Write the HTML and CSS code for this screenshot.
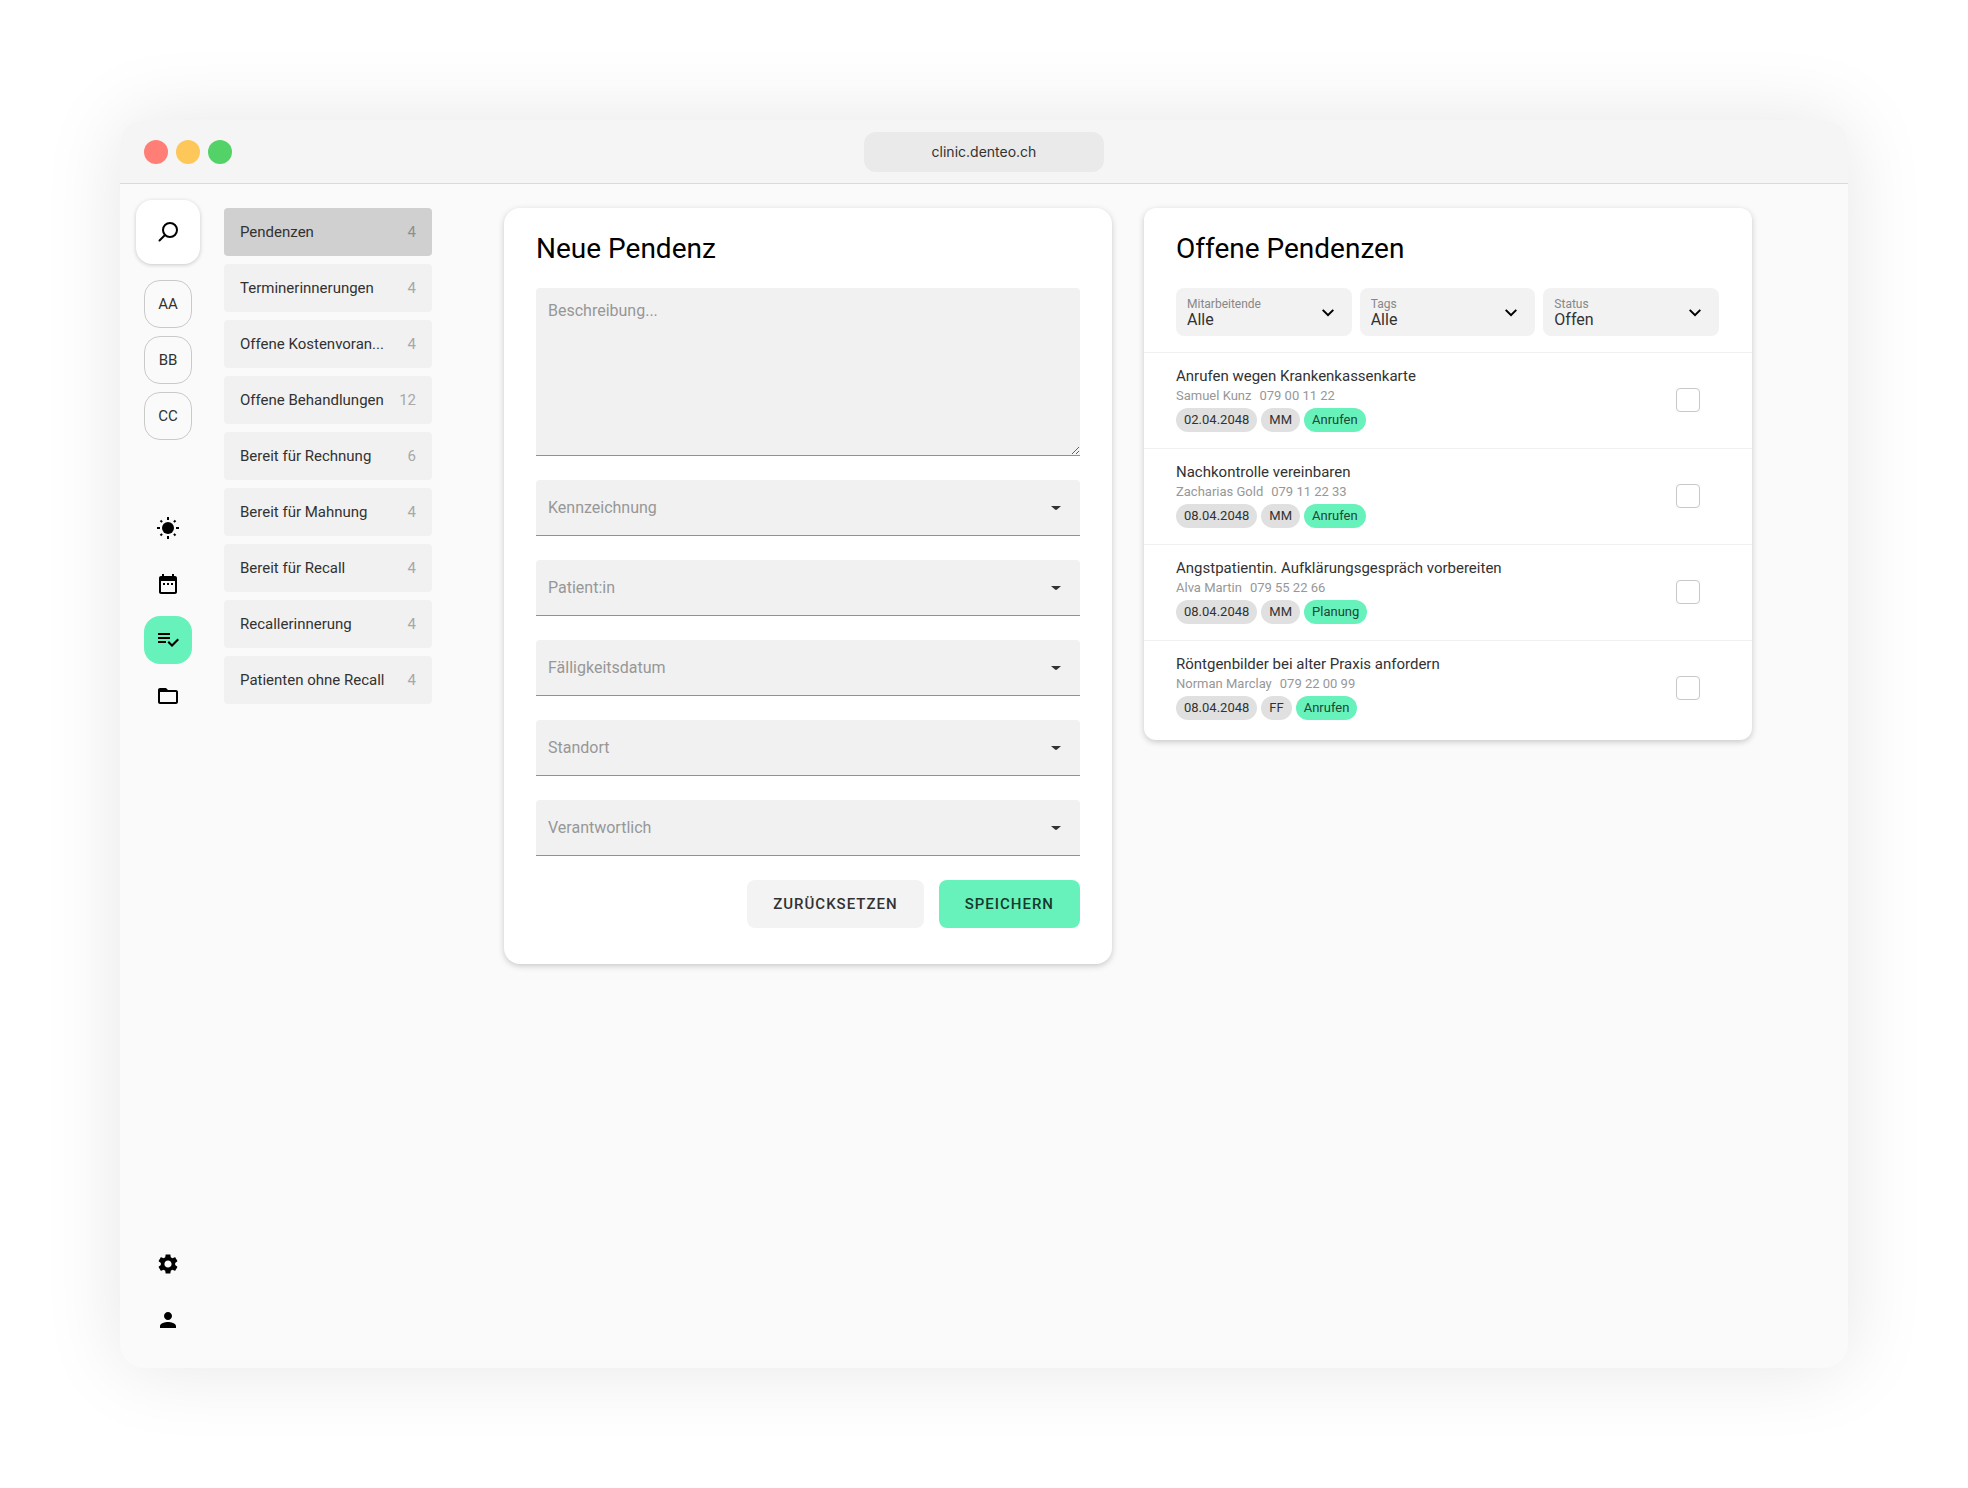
FILE: index.html
```html
<!DOCTYPE html>
<html lang="de">
  <head>
    <meta charset="utf-8" />
    <title>Pendenzen</title>
    <meta name="viewport" content="width=device-width, initial-scale=1" />
    <link rel="stylesheet" href="styles.css">
  </head>
  <body>
    <div class="window">
      <header class="titlebar">
        <div class="dots">
          <span class="dot red"></span>
          <span class="dot yellow"></span>
          <span class="dot green"></span>
        </div>
        <div class="address">clinic.denteo.ch</div>
      </header>

      <div class="app">
        <nav class="rail" aria-label="Hauptnavigation">
          <button class="search" aria-label="Suche">
            <svg class="icon" viewBox="0 0 24 24">
              <g fill="none" stroke="#000" stroke-width="2">
                <circle cx="14" cy="10" r="7" />
                <path d="M9 15l-5.500 5.500" stroke-linecap="round" />
              </g>
            </svg>
          </button>
          <div class="rail-group">
            <button class="avatar">AA</button>
            <button class="avatar">BB</button>
            <button class="avatar">CC</button>
          </div>
          <div class="rail-group rail-main">
            <a class="rail-link" href="#heute" aria-label="Heute">
              <svg class="icon" viewBox="0 0 24 24">
                <circle cx="12" cy="12" r="6" />
                <path fill="none" stroke="#000" stroke-width="2" d="M12 1v3M12 20v3M1 12h3M20 12h3M4.500 4.500l1.600 1.600M17.900 17.900l1.600 1.600M19.500 4.500l-1.600 1.600M6.100 17.900l-1.600 1.600" />
              </svg>
            </a>
            <a class="rail-link" href="#kalender" aria-label="Kalender">
              <svg class="icon" viewBox="0 0 24 24">
                <path d="M9 11H7v2h2v-2zm4 0h-2v2h2v-2zm4 0h-2v2h2v-2zm2-7h-1V2h-2v2H8V2H6v2H5c-1.110 0-1.990.9-1.990 2L3 20c0 1.100.890 2 2 2h14c1.100 0 2-.9 2-2V6c0-1.100-.9-2-2-2zm0 16H5V9h14v11z" />
              </svg>
            </a>
            <a class="rail-link active" href="#pendenzen" aria-label="Pendenzen">
              <svg class="icon" viewBox="0 1 24 24">
                <path d="M14 10H2v2h12v-2zm0-4H2v2h12V6zM2 16h8v-2H2v2zm19.500-4.500L23 13l-6.990 7-4.510-4.500L13 14l3.010 3 5.490-5.500z" />
              </svg>
            </a>
            <a class="rail-link" href="#dokumente" aria-label="Dokumente">
              <svg class="icon" viewBox="0 0 24 24">
                <path d="M20 6h-8l-2-2H4c-1.100 0-1.990.9-1.990 2L2 18c0 1.100.9 2 2 2h16c1.100 0 2-.9 2-2V8c0-1.100-.9-2-2-2zm0 12H4V8h16v10z" />
              </svg>
            </a>
          </div>
          <div class="rail-group rail-bottom">
            <a class="rail-link" href="#einstellungen" aria-label="Einstellungen">
              <svg class="icon" viewBox="0 0 24 24">
                <path d="M19.140 12.940c.04-.3.06-.61.06-.94 0-.32-.02-.64-.07-.94l2.030-1.580c.18-.14.23-.41.12-.61l-1.920-3.320c-.12-.22-.37-.29-.59-.22l-2.390.96c-.5-.38-1.030-.7-1.620-.94l-.36-2.540c-.04-.24-.24-.41-.48-.41h-3.840c-.24 0-.43.17-.47.41l-.36 2.540c-.59.24-1.130.57-1.620.94l-2.390-.96c-.22-.08-.47 0-.59.22L2.740 8.870c-.12.21-.08.47.12.61l2.030 1.580c-.05.3-.09.63-.09.94s.02.64.07.94l-2.030 1.580c-.18.14-.23.41-.12.61l1.920 3.320c.12.22.37.29.59.22l2.390-.96c.5.38 1.030.7 1.620.94l.36 2.540c.05.24.24.41.48.41h3.840c.24 0 .44-.17.47-.41l.36-2.540c.59-.24 1.130-.56 1.620-.94l2.390.96c.22.08.47 0 .59-.22l1.920-3.320c.12-.22.07-.47-.12-.61l-2.010-1.580zM12 15.600c-1.980 0-3.600-1.620-3.600-3.600s1.620-3.600 3.600-3.600 3.600 1.620 3.600 3.600-1.620 3.600-3.600 3.600z" />
              </svg>
            </a>
            <a class="rail-link" href="#profil" aria-label="Profil">
              <svg class="icon" viewBox="0 0 24 24">
                <path d="M12 12c2.210 0 4-1.790 4-4s-1.790-4-4-4-4 1.790-4 4 1.790 4 4 4zm0 2c-2.670 0-8 1.340-8 4v2h16v-2c0-2.660-5.330-4-8-4z" />
              </svg>
            </a>
          </div>
        </nav>

        <nav class="lists" aria-label="Listen">
          <a class="list-link active" href="#pendenzen"><span>Pendenzen</span><span class="count">4</span></a>
          <a class="list-link" href="#terminerinnerungen"><span>Terminerinnerungen</span><span class="count">4</span></a>
          <a class="list-link" href="#kosten"><span>Offene Kostenvoran...</span><span class="count">4</span></a>
          <a class="list-link" href="#behandlungen"><span>Offene Behandlungen</span><span class="count">12</span></a>
          <a class="list-link" href="#rechnung"><span>Bereit für Rechnung</span><span class="count">6</span></a>
          <a class="list-link" href="#mahnung"><span>Bereit für Mahnung</span><span class="count">4</span></a>
          <a class="list-link" href="#recall"><span>Bereit für Recall</span><span class="count">4</span></a>
          <a class="list-link" href="#recallerinnerung"><span>Recallerinnerung</span><span class="count">4</span></a>
          <a class="list-link" href="#ohne-recall"><span>Patienten ohne Recall</span><span class="count">4</span></a>
        </nav>

        <main class="content">
          <form class="card form-card">
            <h1>Neue Pendenz</h1>
            <textarea class="description" aria-label="Beschreibung" placeholder="Beschreibung..."></textarea>
            <div class="field">
              <select aria-label="Kennzeichnung"><option>Kennzeichnung</option></select>
              <svg class="icon" viewBox="0 0 24 24"><path d="M7 10l4 3.600q1 .8 2 0l4-3.600z" /></svg>
            </div>
            <div class="field">
              <select aria-label="Patient:in"><option>Patient:in</option></select>
              <svg class="icon" viewBox="0 0 24 24"><path d="M7 10l4 3.600q1 .8 2 0l4-3.600z" /></svg>
            </div>
            <div class="field">
              <select aria-label="Fälligkeitsdatum"><option>Fälligkeitsdatum</option></select>
              <svg class="icon" viewBox="0 0 24 24"><path d="M7 10l4 3.600q1 .8 2 0l4-3.600z" /></svg>
            </div>
            <div class="field">
              <select aria-label="Standort"><option>Standort</option></select>
              <svg class="icon" viewBox="0 0 24 24"><path d="M7 10l4 3.600q1 .8 2 0l4-3.600z" /></svg>
            </div>
            <div class="field">
              <select aria-label="Verantwortlich"><option>Verantwortlich</option></select>
              <svg class="icon" viewBox="0 0 24 24"><path d="M7 10l4 3.600q1 .8 2 0l4-3.600z" /></svg>
            </div>
            <div class="actions">
              <button class="btn" type="reset">Zurücksetzen</button>
              <button class="btn primary" type="button">Speichern</button>
            </div>
          </form>

          <section class="card open-card">
            <h1>Offene Pendenzen</h1>
            <div class="filters">
              <div class="filter">
                <label for="staff">Mitarbeitende</label>
                <select id="staff"><option>Alle</option></select>
                <svg class="icon" viewBox="0 0 24 24"><path d="M7.410 8.200 12 12.780l4.590-4.580L18 9.610l-6 6-6-6z" /></svg>
              </div>
              <div class="filter">
                <label for="tags">Tags</label>
                <select id="tags"><option>Alle</option></select>
                <svg class="icon" viewBox="0 0 24 24"><path d="M7.410 8.200 12 12.780l4.590-4.580L18 9.610l-6 6-6-6z" /></svg>
              </div>
              <div class="filter">
                <label for="status">Status</label>
                <select id="status"><option>Offen</option></select>
                <svg class="icon" viewBox="0 0 24 24"><path d="M7.410 8.200 12 12.780l4.590-4.580L18 9.610l-6 6-6-6z" /></svg>
              </div>
            </div>
            <ul class="tasks">
              <li class="task">
                <div class="task-text">
                  <label class="task-title" for="task1">Anrufen wegen Krankenkassenkarte</label>
                  <div class="patient"><span>Samuel Kunz</span><span>079 00 11 22</span></div>
                  <div class="chips"><span class="chip">02.04.2048</span><span class="chip">MM</span><span class="chip tag">Anrufen</span></div>
                </div>
                <input type="checkbox" id="task1" />
              </li>
              <li class="task">
                <div class="task-text">
                  <label class="task-title" for="task2">Nachkontrolle vereinbaren</label>
                  <div class="patient"><span>Zacharias Gold</span><span>079 11 22 33</span></div>
                  <div class="chips"><span class="chip">08.04.2048</span><span class="chip">MM</span><span class="chip tag">Anrufen</span></div>
                </div>
                <input type="checkbox" id="task2" />
              </li>
              <li class="task">
                <div class="task-text">
                  <label class="task-title" for="task3">Angstpatientin. Aufklärungsgespräch vorbereiten</label>
                  <div class="patient"><span>Alva Martin</span><span>079 55 22 66</span></div>
                  <div class="chips"><span class="chip">08.04.2048</span><span class="chip">MM</span><span class="chip tag">Planung</span></div>
                </div>
                <input type="checkbox" id="task3" />
              </li>
              <li class="task">
                <div class="task-text">
                  <label class="task-title" for="task4">Röntgenbilder bei alter Praxis anfordern</label>
                  <div class="patient"><span>Norman Marclay</span><span>079 22 00 99</span></div>
                  <div class="chips"><span class="chip">08.04.2048</span><span class="chip">FF</span><span class="chip tag">Anrufen</span></div>
                </div>
                <input type="checkbox" id="task4" />
              </li>
            </ul>
          </section>
        </main>
      </div>
    </div>
  </body>
</html>
```
FILE: styles.css
```css
* {
  box-sizing: border-box;
}

body {
  margin: 0;
  padding: 120px;
  min-height: 100vh;
  display: flex;
  background: #fff;
  color: #323232;
  font-family: Roboto, sans-serif;
  font-size: 15px;
}

button,
select,
textarea {
  font-family: inherit;
  color: inherit;
  border: none;
  margin: 0;
}

button {
  cursor: pointer;
}

a {
  color: inherit;
  text-decoration: none;
}

.icon {
  display: block;
  width: 24px;
  height: 24px;
}

.window {
  flex: 1;
  display: flex;
  flex-direction: column;
  background: #fafafa;
  border-radius: 24px;
  box-shadow: 0 0 80px rgba(0, 0, 0, 0.1);
}

/* title bar */

.titlebar {
  display: grid;
  grid-template-columns: 1fr 240px 1fr;
  align-items: center;
  height: 64px;
  padding: 0 24px;
  background: #f5f5f5;
  border-bottom: 1px solid #dadada;
  border-radius: 24px 24px 0 0;
}

.dots {
  display: flex;
  gap: 8px;
}

.dot {
  width: 24px;
  height: 24px;
  border-radius: 50%;
}

.red {
  background: #ff7e76;
}

.yellow {
  background: #fdc75a;
}

.green {
  background: #52d267;
}

.address {
  background: #eaeaea;
  border-radius: 12px;
  line-height: 40px;
  text-align: center;
  font-family: Inter, sans-serif;
  font-size: 14px;
}

.app {
  flex: 1;
  display: flex;
}

/* icon rail */

.rail {
  display: flex;
  flex-direction: column;
  align-items: center;
  gap: 16px;
  padding: 16px 24px 24px 16px;
}

.search {
  display: flex;
  align-items: center;
  justify-content: center;
  width: 64px;
  height: 64px;
  padding: 0;
  background: #fff;
  border-radius: 16px;
  box-shadow: 0 1px 4px rgba(0, 0, 0, 0.2);
}

.rail-group {
  display: flex;
  flex-direction: column;
  gap: 8px;
}

.rail-main {
  margin-top: 48px;
}

.rail-bottom {
  margin-top: auto;
}

.avatar,
.rail-link {
  display: flex;
  align-items: center;
  justify-content: center;
  width: 48px;
  height: 48px;
  border-radius: 16px;
}

.avatar {
  padding: 0;
  background: none;
  border: 1px solid #cacaca;
  font-size: 15px;
}

.rail-link.active {
  background: #68f2bb;
}

/* list navigation */

.lists {
  display: flex;
  flex-direction: column;
  gap: 8px;
  width: 208px;
  padding-top: 24px;
}

.list-link {
  display: flex;
  justify-content: space-between;
  align-items: center;
  height: 48px;
  padding: 0 16px;
  background: #f1f1f1;
  border-radius: 4px;
}

.list-link.active {
  background: #d0d0d0;
}

.count {
  color: #a8a8a8;
}

.active .count {
  color: #8f8f8f;
}

/* cards */

.content {
  flex: 1;
  display: grid;
  grid-template-columns: 1fr 1fr;
  align-items: start;
  gap: 32px;
  padding: 24px 96px 24px 72px;
}

.card {
  background: #fff;
  border-radius: 16px;
  box-shadow: 0 2px 6px rgba(0, 0, 0, 0.2);
}

h1 {
  margin: 0;
  padding-top: 2px;
  color: #000;
  font-size: 28px;
  font-weight: 400;
  line-height: 30px;
}

.form-card {
  display: flex;
  flex-direction: column;
  gap: 24px;
  padding: 24px 32px 36px;
}

.description,
.field select {
  width: 100%;
  padding: 0 12px;
  background: #f1f1f1;
  border-bottom: 1px solid #919191;
  border-radius: 4px 4px 0 0;
  font-size: 16px;
  color: #979797;
}

.description {
  display: block;
  height: 168px;
  padding: 12px;
  line-height: 22px;
  resize: vertical;
}

.description::placeholder {
  color: #979797;
}

.field {
  display: grid;
  align-items: center;
}

.field > * {
  grid-area: 1 / 1;
}

.field select {
  height: 56px;
  appearance: none;
}

.field .icon {
  justify-self: end;
  margin-right: 12px;
  fill: #323232;
  pointer-events: none;
}

.actions {
  display: flex;
  justify-content: flex-end;
  gap: 15px;
}

.btn {
  height: 48px;
  padding: 0 26px;
  background: #f3f3f3;
  border-radius: 8px;
  font-size: 15px;
  font-weight: 500;
  letter-spacing: 1px;
  text-transform: uppercase;
}

.btn.primary {
  background: #68f2bb;
  color: #173a2c;
}

/* open tasks */

.open-card {
  padding: 24px 0 4px;
  border-radius: 12px;
}

.open-card h1 {
  padding-left: 32px;
  padding-right: 32px;
}

.filters {
  display: grid;
  grid-template-columns: repeat(3, 1fr);
  gap: 8px;
  padding: 24px 33px 16px 32px;
}

.filter {
  display: grid;
  grid-template-columns: 1fr 24px;
  align-content: center;
  height: 48px;
  padding: 2px 12px 0 11px;
  background: #f2f2f2;
  border-radius: 8px;
}

.filter label {
  font-size: 12px;
  line-height: 14px;
  color: #878787;
}

.filter select {
  grid-row: 2;
  padding: 0;
  background: none;
  font-size: 16px;
  line-height: 18px;
  appearance: none;
}

.filter .icon {
  grid-column: 2;
  grid-row: 1 / 3;
  align-self: center;
}

.tasks {
  list-style: none;
  margin: 0;
  padding: 0;
}

.task {
  display: flex;
  justify-content: space-between;
  align-items: center;
  height: 96px;
  padding: 0 52px 1px 32px;
  border-top: 1px solid #f0f0f0;
}

.task-text {
  padding-bottom: 2px;
}

.task-title {
  display: block;
  line-height: 20px;
}

.patient {
  display: flex;
  gap: 8px;
  color: #979797;
  font-size: 13px;
  line-height: 20px;
}

.chips {
  display: flex;
  gap: 4px;
  margin-top: 2px;
}

.chip {
  padding: 0 8px;
  background: #e0e0e0;
  border-radius: 12px;
  font-size: 13px;
  line-height: 24px;
}

.chip.tag {
  background: #68f2bb;
  color: #1f4536;
}

.task input {
  appearance: none;
  width: 24px;
  height: 24px;
  margin: 0;
  background: #fff;
  border: 1px solid #c8c8c8;
  border-radius: 4px;
}
```
